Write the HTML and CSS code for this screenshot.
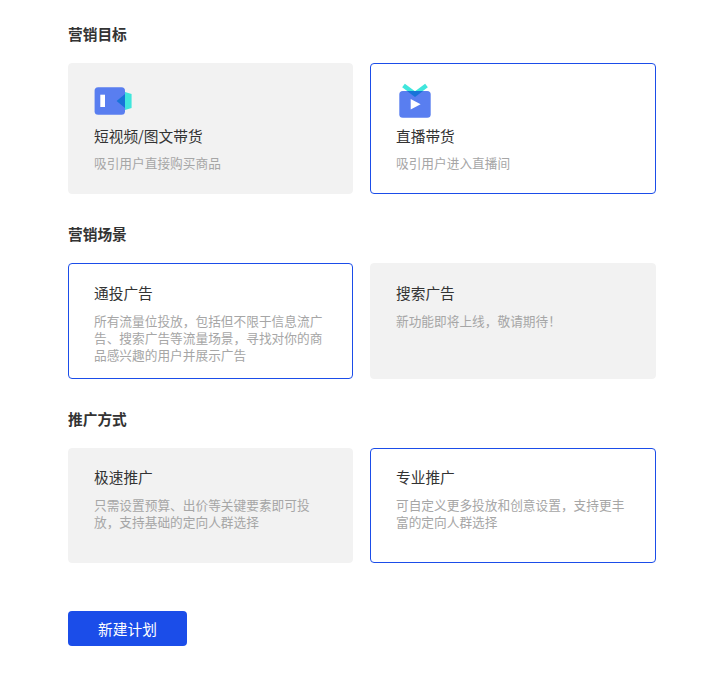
FILE: index.html
```html
<!DOCTYPE html>
<html lang="zh-CN">
  <head>
    <meta charset="UTF-8" />
    <meta name="viewport" content="width=device-width, initial-scale=1.0" />
    <title>新建计划</title>
    <link rel="stylesheet" href="styles.css">
  </head>
  <body>
    <div class="page">
      <section class="group">
        <h2>营销目标</h2>
        <div class="options options-goal">
          <div class="card">
            <svg class="icon" width="40" height="36" viewBox="0 0 40 36">
              <rect x="0.6" y="4.2" width="30.4" height="27.6" rx="3.5" fill="#597ef0" />
              <rect x="6.3" y="11.7" width="4.7" height="12.3" fill="#fff" />
              <path d="M31 9L37.6 11V25L31 27Z" fill="#40e6dc" />
              <path d="M22.6 18L31 11V25Z" fill="#1673d8" />
            </svg>
            <div class="name">短视频/图文带货</div>
            <div class="desc">吸引用户直接购买商品</div>
          </div>
          <div class="card active">
            <svg class="icon" width="40" height="36" viewBox="0 0 40 36">
              <path d="M7.5 2.5L19 11L30.5 2.5" fill="none" stroke="#40e6dc" stroke-width="4.6" />
              <rect x="3.3" y="8" width="31.4" height="26.7" rx="3.5" fill="#597ef0" />
              <path d="M11 8H27L19 14Z" fill="#1673d8" />
              <path d="M14.7 16L24.6 21.3L14.7 26.6Z" fill="#fff" />
            </svg>
            <div class="name">直播带货</div>
            <div class="desc">吸引用户进入直播间</div>
          </div>
        </div>
      </section>

      <section class="group">
        <h2>营销场景</h2>
        <div class="options options-scene">
          <div class="card active">
            <div class="name">通投广告</div>
            <div class="desc">所有流量位投放，包括但不限于信息流广告、搜索广告等流量场景，寻找对你的商品感兴趣的用户并展示广告</div>
          </div>
          <div class="card">
            <div class="name">搜索广告</div>
            <div class="desc">新功能即将上线，敬请期待！</div>
          </div>
        </div>
      </section>

      <section class="group">
        <h2>推广方式</h2>
        <div class="options options-way">
          <div class="card">
            <div class="name">极速推广</div>
            <div class="desc">只需设置预算、出价等关键要素即可投放，支持基础的定向人群选择</div>
          </div>
          <div class="card active">
            <div class="name">专业推广</div>
            <div class="desc">可自定义更多投放和创意设置，支持更丰富的定向人群选择</div>
          </div>
        </div>
      </section>

      <button class="submit">新建计划</button>
    </div>
  </body>
</html>
```

FILE: styles.css
```css
* {
  margin: 0;
  padding: 0;
  box-sizing: border-box;
}

body {
  font-family: "Noto Sans CJK SC", "Noto Sans", sans-serif;
  background: #fff;
  color: #333;
}

.page {
  padding: 23px 56px 39px 68px;
}

.group {
  margin-bottom: 29px;
}

h2 {
  font-size: 14.7px;
  font-weight: 700;
  line-height: 22px;
  margin-bottom: 18px;
  color: #333;
}

.options {
  display: grid;
  grid-template-columns: 285px 1fr;
  column-gap: 17px;
}

.options-goal {
  height: 131px;
}

.options-scene {
  height: 116px;
}

.options-way {
  height: 115px;
}

.card {
  background: #f2f2f2;
  border: 1px solid #f2f2f2;
  border-radius: 4px;
  padding: 19px 24px 0 25px;
}

.options-goal .desc {
  margin-top: 7px;
}

.options-scene .card {
  padding-top: 18px;
}

.options-way .card {
  padding-top: 17px;
}

.card.active {
  background: #fff;
  border-color: #1b4de9;
}

.icon {
  display: block;
  margin-bottom: 6px;
}

.name {
  font-size: 14.7px;
  line-height: 22px;
  color: #333;
}

.desc {
  font-size: 12.7px;
  line-height: 17px;
  margin-top: 8px;
  color: #a6a6a6;
}

.submit {
  display: block;
  width: 119px;
  height: 35px;
  margin-top: 48px;
  background: #1b4de9;
  color: #fff;
  border: none;
  border-radius: 4px;
  font-family: inherit;
  font-size: 14.7px;
}
```
